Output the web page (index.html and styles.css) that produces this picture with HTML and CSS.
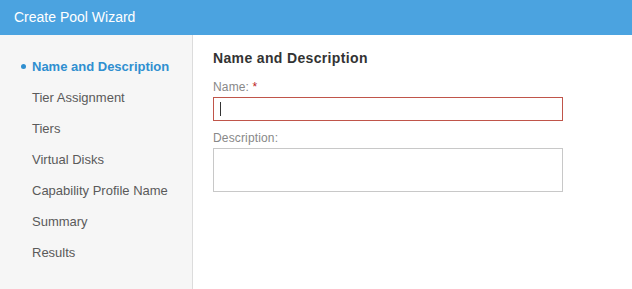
FILE: index.html
```html
<!DOCTYPE html>
<html lang="en">
<head>
    <meta charset="UTF-8">
    <title>Create Pool Wizard</title>
    <link rel="stylesheet" href="styles.css">
</head>
<body>
    <div class="header">Create Pool Wizard</div>
    <div class="wizard">
        <ul class="steps">
            <li class="active">Name and Description</li>
            <li>Tier Assignment</li>
            <li>Tiers</li>
            <li>Virtual Disks</li>
            <li>Capability Profile Name</li>
            <li>Summary</li>
            <li>Results</li>
        </ul>
        <div class="content">
            <h2>Name and Description</h2>
            <label class="field-label">Name: <span class="req">*</span></label>
            <div class="input invalid"><span class="caret"></span></div>
            <label class="field-label">Description:</label>
            <div class="input textarea"></div>
        </div>
    </div>
</body>
</html>
```

FILE: styles.css
```css
* {
    box-sizing: border-box;
    margin: 0;
    padding: 0;
}
html, body {
    height: 100%;
}
body {
    font-family: "Liberation Sans", Arial, sans-serif;
    background-color: #fff;
    display: flex;
    flex-direction: column;
}
.header {
    height: 35px;
    background-color: #4ba3e0;
    color: #fff;
    font-size: 14px;
    line-height: 35px;
    padding-left: 14px;
}
.wizard {
    flex: 1;
    display: flex;
}
.steps {
    width: 193px;
    background-color: #f6f6f6;
    border-right: 1px solid #dcdcdc;
    list-style: none;
    padding-top: 16px;
    padding-left: 32px;
}
.steps li {
    font-size: 13px;
    line-height: 31px;
    height: 31px;
    color: #5a5a5a;
    position: relative;
}
.steps li.active {
    color: #2f8fd0;
    font-weight: bold;
}
.steps li.active::before {
    content: "";
    position: absolute;
    left: -11px;
    top: 13px;
    width: 5px;
    height: 5px;
    border-radius: 50%;
    background-color: #2f8fd0;
}
.content {
    flex: 1;
    padding: 15px 0 0 20px;
}
.content h2 {
    font-size: 14px;
    letter-spacing: 0.35px;
    line-height: 16px;
    color: #333;
    margin-bottom: 14px;
}
.field-label {
    display: block;
    font-size: 12px;
    letter-spacing: 0.15px;
    line-height: 14px;
    color: #888;
    margin-bottom: 3px;
}
.req {
    color: #b22;
}
.input {
    width: 350px;
    height: 24px;
    border: 1px solid #c8c8c8;
    background-color: #fff;
    margin-bottom: 10px;
    padding: 4px 6px;
}
.input.invalid {
    border-color: #c0554a;
}
.caret {
    display: block;
    width: 1px;
    height: 14px;
    background-color: #333;
}
.textarea {
    height: 44px;
}
```
